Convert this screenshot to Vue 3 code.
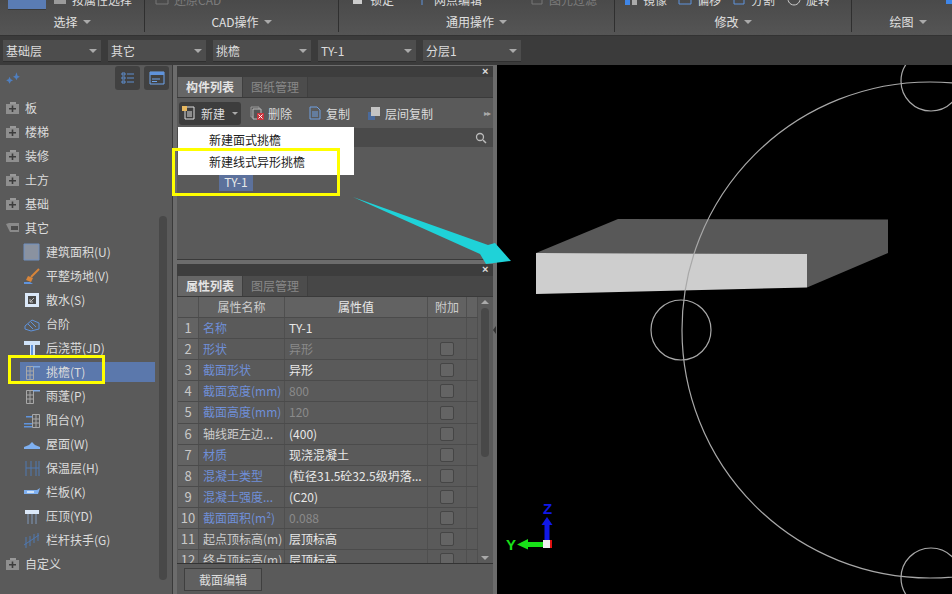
<template>
  <div class="app">
    <!-- 顶部功能区 -->
    <div class="ribbon">
      <div v-for="g in ribbonGroups" :key="g.label" class="rb-group" :class="g.cls">
        <div class="rb-items">
          <div v-if="g.button" class="rb-bigbtn"></div>
          <div v-for="it in g.items" :key="it.text" class="rb-item" :class="{ dim: it.dim }" :style="{ width: it.w + 'px' }">
            <svg class="rb-icon" viewBox="0 0 14 14"><path v-for="(p, i) in it.icon" :key="i" :d="p.d" :fill="p.f || 'none'" :stroke="p.s || 'none'" /></svg>
            <span>{{ it.text }}</span>
          </div>
        </div>
        <div class="rb-label">{{ g.label }}<i class="tri"></i></div>
      </div>
    </div>

    <!-- 楼层 / 构件选择条 -->
    <div class="combos">
      <div v-for="c in combos" :key="c" class="combo"><span>{{ c }}</span><i class="tri"></i></div>
    </div>

    <div class="main">
      <!-- 左侧构件树 -->
      <div class="left">
        <div class="left-top">
          <svg class="sparkle" viewBox="0 0 14 10"><path d="M1 7l2-1 1-2 1 2 2 1-2 1-1 2-1-2zM7 4l2-1 1-3 1 3 2 1-2 1-1 2-1-2z" fill="#4f7fc0" /></svg>
          <div class="view-btns">
            <div class="view-btn">
              <svg viewBox="0 0 14 14"><path d="M1 2h3v2H1zM1 6h3v2H1zM1 10h3v2H1z" fill="none" stroke="#5f8fd0" /><path d="M6 3h7M6 7h7M6 11h7" stroke="#5f8fd0" /></svg>
            </div>
            <div class="view-btn">
              <svg viewBox="0 0 16 14"><path d="M1 1h14v12H1z" fill="none" stroke="#6fa4ec" /><path d="M1 1h14v3H1z" fill="#5f93dc" /><path d="M3 8h8M3 10.500h5" stroke="#6fa4ec" /></svg>
            </div>
          </div>
        </div>
        <div class="left-body">
          <div class="tree">
            <div v-for="n in tree" :key="n.text" class="row" :class="{ child: n.icon, selected: n.selected }">
              <svg v-if="n.icon" class="tree-icon" viewBox="0 0 18 18">
                <path v-for="(p, i) in n.icon" :key="i" :d="p.d" :fill="p.f || 'none'" :stroke="p.s || 'none'" :stroke-width="p.w || 1" />
              </svg>
              <svg v-else class="folder" viewBox="0 0 14 12">
                <template v-if="n.open">
                  <path d="M0 2l3 -1h10v9H4z" fill="#8a8a8a" />
                  <path d="M5 4h7v4H5z" fill="#4c4c4c" />
                </template>
                <template v-else>
                  <path d="M4 0h6v2H4z" fill="#999" />
                  <path d="M0 2h13v10H0z" fill="#8f8f8f" />
                  <path d="M3 6h7v1.500H3zM5.700 3.500h1.600v6.500H5.700z" fill="#3c3c3c" />
                </template>
              </svg>
              <span class="row-text">{{ n.text }}</span>
            </div>
          </div>
          <div class="tree-scroll"></div>
        </div>
      </div>

      <!-- 中间面板 -->
      <div class="mid">
        <div class="panel list-panel">
          <div class="panel-head"><span class="close">×</span></div>
          <div class="tabs">
            <div class="tab on">构件列表</div>
            <div class="tab">图纸管理</div>
          </div>
          <div class="tools">
            <div class="tool-new">
              <svg class="tool-icon" viewBox="0 0 14 14"><path d="M3 1h9v12H3z" fill="#3d3d3d" stroke="#ddd" /><path d="M5 6h5M5 8h5M5 10h5" stroke="#ddd" /><path d="M0 0h5v5H0z" fill="#e8b860" /></svg>
              <span>新建</span><i class="tri small"></i>
            </div>
            <div class="tool">
              <svg class="tool-icon" viewBox="0 0 14 14"><path d="M1 1h8v10H1z" fill="none" stroke="#999" /><path d="M3 3h8v10H3z" fill="#555" stroke="#bbb" /><path d="M7 7h7v7H7z" fill="#c8343c" /><path d="M8.500 8.500l4 4M12.500 8.500l-4 4" stroke="#fff" /></svg>
              <span>删除</span>
            </div>
            <div class="tool">
              <svg class="tool-icon" viewBox="0 0 14 14"><path d="M2 1h7l3 3v9H2z" fill="none" stroke="#6f9fe0" /><path d="M4 6h6M4 8h6M4 10h6" stroke="#6f9fe0" /></svg>
              <span>复制</span>
            </div>
            <div class="tool">
              <svg class="tool-icon" viewBox="0 0 14 14"><path d="M1 6h7v8H1z" fill="#4a6a9c" /><path d="M4 1h9v9H4z" fill="#c4c4c4" /></svg>
              <span>层间复制</span>
            </div>
            <div class="more">▸▸</div>
          </div>
          <div class="search">
            <svg viewBox="0 0 12 12" class="search-icon"><circle cx="5" cy="5" r="3.500" fill="none" stroke="#bbb" stroke-width="1.300" /><path d="M8 8l3 3" stroke="#bbb" stroke-width="1.500" /></svg>
          </div>
          <div class="list-body">
            <span class="list-item">TY-1</span>
          </div>
          <div class="menu">
            <div class="menu-row">新建面式挑檐</div>
            <div class="menu-row">新建线式异形挑檐</div>
          </div>
        </div>

        <div class="panel prop-panel">
          <div class="panel-head"><span class="close">×</span></div>
          <div class="tabs">
            <div class="tab on">属性列表</div>
            <div class="tab">图层管理</div>
          </div>
          <div class="prop-body">
            <div class="grid">
              <div class="grid-row head">
                <div class="c-idx"></div>
                <div class="c-name">属性名称</div>
                <div class="c-val">属性值</div>
                <div class="c-add">附加</div>
                <div class="c-pad"></div>
              </div>
              <div v-for="(r, i) in props" :key="i" class="grid-row">
                <div class="c-idx">{{ i + 1 }}</div>
                <div class="c-name" :class="{ link: r.link }">{{ r.name }}</div>
                <div class="c-val" :class="{ gray: r.gray }">{{ r.val }}</div>
                <div class="c-add"><i v-if="i > 0" class="check"></i></div>
                <div class="c-pad"></div>
              </div>
            </div>
            <div class="v-scroll">
              <i class="up"></i>
              <div class="thumb"></div>
              <i class="down"></i>
            </div>
          </div>
        </div>

        <div class="foot"><div class="foot-btn">截面编辑</div></div>
      </div>

      <div class="splitter"><i></i></div>

      <!-- 三维视图 -->
      <div class="view">
        <svg width="455" height="529" viewBox="497 65 455 529">
          <g fill="none" stroke="#a8a8a8" stroke-width="1.200">
            <circle cx="681" cy="330" r="30" />
            <circle cx="931" cy="81" r="30" />
            <circle cx="931" cy="578" r="30" />
          </g>
          <path d="M536 253L618 219L888 219.500L888 253L807 287.500L807 254Z" fill="#585858" />
          <path d="M536 253L807 254L807 287.500L536 294Z" fill="#cecece" />
          <circle cx="930" cy="330" r="248" fill="none" stroke="#a8a8a8" stroke-width="1.200" />
          <path d="M549.500 541V525H552.500L547 517L541.500 525H544.500V541Z" fill="#1018e8" />
          <path d="M544 547H528V549.500L517 544.500L528 539V542H544Z" fill="#18e018" />
          <path d="M549 540h3v8h-3z" fill="#e01010" />
          <path d="M543 540h7v8h-7z" fill="#f0f0f0" />
          <text x="543" y="514" class="axis z">Z</text>
          <text x="506" y="550" class="axis y">Y</text>
        </svg>
      </div>

      <!-- 教程标注 -->
      <div class="mark mark-new"></div>
      <div class="mark mark-row"></div>
      <svg class="arrow" width="952" height="594" viewBox="0 0 952 594">
        <path d="M353 197L488 245L495 243L511 261L486 264L480 254Z" fill="#1fd2d8" />
      </svg>
    </div>
  </div>
</template>

<script setup>
const blue = '#5f93dc'
const gray = '#9a9a9a'

const ribbonGroups = [
  {
    label: '选择', cls: 'g1', button: true,
    items: [{ text: '按属性选择', w: 90, icon: [{ d: 'M1 2h12v10H1z', f: gray }] }]
  },
  {
    label: 'CAD操作', cls: 'g2',
    items: [{ text: '还原CAD', w: 90, dim: true, icon: [{ d: 'M1 2h12v10H1z', s: '#777' }] }]
  },
  {
    label: '通用操作', cls: 'g3',
    items: [
      { text: '锁定', w: 64, icon: [{ d: 'M2 3h9v9H2z', f: '#ccc' }] },
      { text: '网点编辑', w: 115, icon: [{ d: 'M1 7h12M7 1v12', s: blue }] },
      { text: '图元过滤', w: 70, dim: true, icon: [{ d: 'M2 2h10v10H2z', s: '#777' }] }
    ]
  },
  {
    label: '修改', cls: 'g4',
    items: [
      { text: '镜像', w: 54, icon: [{ d: 'M1 1h5v12H1z', f: '#3f86e8' }, { d: 'M8 1h5v12H8z', f: '#aaa' }] },
      { text: '偏移', w: 54, icon: [{ d: 'M1 4h12v8H1z', s: blue }] },
      { text: '分割', w: 55, icon: [{ d: 'M2 2h10v10H2z', s: blue }] },
      { text: '旋转', w: 50, icon: [{ d: 'M7 1a6 6 0 1 0 .01 0z', s: '#ccc' }] }
    ]
  },
  {
    label: '绘图', cls: 'g5',
    items: [{ text: '', w: 20, icon: [{ d: 'M1 4h10v8H1z', f: '#3f86e8' }] }]
  }
]

const combos = ['基础层', '其它', '挑檐', 'TY-1', '分层1']

const gridIcon = [
  { d: 'M3.500 3.500h7v13h-7zM7 3.500v13M3.500 8h7M3.500 12h7', s: '#a8a8a8' }
]

const tree = [
  { text: '板' }, { text: '楼梯' }, { text: '装修' }, { text: '土方' }, { text: '基础' },
  { text: '其它', open: true },
  { text: '建筑面积(U)', icon: [{ d: 'M1 1h15v16H1z', f: '#8a92a0', s: '#6f8fc0' }] },
  {
    text: '平整场地(V)',
    icon: [
      { d: 'M16 2L8 10', s: '#d8853a', w: 2 },
      { d: 'M5 9l5 2-2 4-5-2z', f: '#d8853a' },
      { d: 'M1 15l6 0 3 2H1z', f: '#5f93dc' }
    ]
  },
  {
    text: '散水(S)',
    icon: [
      { d: 'M2 2h14v14H2z', f: '#dbe8f8' },
      { d: 'M5 5h8v8H5z', f: '#4a4a4a' },
      { d: 'M7 11l4-4M7 8v3h3', s: '#c0c0c0' }
    ]
  },
  {
    text: '台阶',
    icon: [
      { d: 'M2 11l7-6 7 3v6l-8 2-6-2z', s: '#5f93dc' },
      { d: 'M5 9l5 5M8 7l5 5', s: '#5f93dc' }
    ]
  },
  {
    text: '后浇带(JD)',
    icon: [
      { d: 'M1 2h16v4H12v10H7V6H1z', f: '#cfe2f8' },
      { d: 'M8 6h2v10H8z', f: '#5f93dc' }
    ]
  },
  { text: '挑檐(T)', selected: true, icon: [...gridIcon, { d: 'M10 3h7v1.500h-7z', f: '#7fa8e0' }] },
  { text: '雨蓬(P)', icon: [...gridIcon, { d: 'M10 3h7v1.500h-7z', f: '#7fa8e0' }] },
  {
    text: '阳台(Y)',
    icon: [
      { d: 'M9.500 3.500h7v13h-7zM13 3.500v13M9.500 8h7M9.500 12h7', s: '#a8a8a8' },
      { d: 'M3 5h6v1.500H3zM1 12h8v1.500H1zM1 15h8v1.500H1z', f: '#5f93dc' }
    ]
  },
  { text: '屋面(W)', icon: [{ d: 'M1 12l5-2 3-3 3 3 5 2v2H1z', f: '#7fb0f0' }] },
  { text: '保温层(H)', icon: [{ d: 'M3 2v15M8 2v15M13 2v15M16 2v15M3 9h13', s: '#4f78b0' }] },
  { text: '栏板(K)', icon: [{ d: 'M1 7h13l3-2-2 6H1z', f: '#7fb0f0' }, { d: 'M4 8h7v2H4z', f: '#cfe2f8' }] },
  { text: '压顶(YD)', icon: [{ d: 'M2 3h14v4H2z', f: '#dbe8f8' }, { d: 'M5 7v10M9 7v10M13 7v10', s: '#7f97b8' }] },
  { text: '栏杆扶手(G)', icon: [{ d: 'M1 14L16 4M3 6v11M7 5v10M11 3v9M15 2v8', s: '#4f78b0' }] },
  { text: '自定义' }
]

const props = [
  { name: '名称', val: 'TY-1', link: true },
  { name: '形状', val: '异形', link: true, gray: true },
  { name: '截面形状', val: '异形', link: true },
  { name: '截面宽度(mm)', val: '800', link: true, gray: true },
  { name: '截面高度(mm)', val: '120', link: true, gray: true },
  { name: '轴线距左边...', val: '(400)' },
  { name: '材质', val: '现浇混凝土', link: true },
  { name: '混凝土类型', val: '(粒径31.5砼32.5级坍落...', link: true },
  { name: '混凝土强度...', val: '(C20)', link: true },
  { name: '截面面积(m²)', val: '0.088', link: true, gray: true },
  { name: '起点顶标高(m)', val: '层顶标高' },
  { name: '终点顶标高(m)', val: '层顶标高' }
]
</script>

<style>
html,
body {
  margin: 0;
  background: #000;
}
</style>

<style scoped>
.app {
  position: relative;
  width: 952px;
  height: 594px;
  overflow: hidden;
  display: flex;
  flex-direction: column;
  font-family: "Noto Sans CJK SC", "Liberation Sans", sans-serif;
  font-size: 12px;
  color: #dcdcdc;
}

.tri {
  display: inline-block;
  width: 0;
  height: 0;
  border-left: 4px solid transparent;
  border-right: 4px solid transparent;
  border-top: 4px solid #aaa;
}

/* ribbon */
.ribbon {
  height: 36px;
  flex: none;
  display: flex;
  background: linear-gradient(#4a4a4a, #555);
  border-bottom: 1px solid #333;
  box-sizing: border-box;
  overflow: hidden;
}
.rb-group {
  flex: none;
  box-sizing: border-box;
  border-right: 1px solid #2f2f2f;
  height: 32px;
}
.g1 { width: 145px; padding-left: 8px; }
.g2 { width: 194px; padding-left: 10px; }
.g3 { width: 276px; padding-left: 12px; }
.g4 { width: 237px; padding-left: 9px; }
.g5 { width: 112px; padding-left: 93px; border-right: 0; }
.g1 .rb-label { margin-left: -8px; }
.g2 .rb-label { margin-left: -10px; }
.g3 .rb-label { margin-left: -12px; }
.g4 .rb-label { margin-left: -9px; }
.g5 .rb-label { margin-left: -93px; }
.rb-items {
  height: 12px;
  display: flex;
  overflow: hidden;
}
.rb-bigbtn {
  width: 38px;
  height: 9px;
  flex: none;
  margin-right: 7px;
  background: #5a7cb4;
  border-bottom: 1px solid #3a3a3a;
}
.rb-item {
  flex: none;
  display: flex;
  align-items: center;
  gap: 5px;
  height: 16px;
  margin-top: -9px;
}
.rb-item.dim { color: #7c7c7c; }
.rb-icon {
  width: 14px;
  height: 14px;
  flex: none;
}
.rb-label {
  height: 20px;
  line-height: 20px;
  display: flex;
  justify-content: center;
  align-items: center;
  gap: 5px;
  color: #e0e0e0;
}

/* combo row */
.combos {
  height: 29px;
  flex: none;
  box-sizing: border-box;
  padding: 4px 0 0 3px;
  display: flex;
  gap: 7px;
  background: #3b3b3b;
}
.combo {
  width: 98px;
  height: 22px;
  box-sizing: border-box;
  padding: 0 4px 0 3px;
  display: flex;
  align-items: center;
  justify-content: space-between;
  background: #4d4d4d;
  border-bottom: 1px solid #2f2f2f;
}

/* main area */
.main {
  flex: 1;
  min-height: 0;
  display: flex;
}

.left {
  width: 173px;
  flex: none;
  box-sizing: border-box;
  background: #5a5a5a;
  border-right: 1px solid #3a3a3a;
}
.left-top {
  height: 28px;
  display: flex;
  align-items: flex-start;
  justify-content: space-between;
  padding: 1px 3px 0 5px;
  box-sizing: border-box;
}
.sparkle {
  width: 16px;
  height: 12px;
  margin-top: 6px;
}
.view-btns {
  display: flex;
  gap: 4px;
}
.view-btn {
  width: 25px;
  height: 24px;
  box-sizing: border-box;
  background: #414141;
  border-radius: 3px;
  display: flex;
  align-items: center;
  justify-content: center;
}
.view-btn svg {
  width: 16px;
  height: 14px;
}
.left-body {
  display: flex;
  padding-top: 3px;
}
.tree {
  width: 155px;
  flex: none;
}
.row {
  height: 24px;
  display: flex;
  align-items: center;
  gap: 5px;
  padding-left: 6px;
  box-sizing: border-box;
}
.row-text {
  padding-bottom: 2px;
}
.row.child {
  margin-left: 20px;
  padding-left: 3px;
}
.row.selected {
  background: #5b78ac;
  height: 20px;
  margin: 2px 0 2px 20px;
}
.folder {
  width: 14px;
  height: 12px;
  flex: none;
}
.tree-icon {
  width: 18px;
  height: 18px;
  flex: none;
}
.tree-scroll {
  width: 8px;
  height: 364px;
  margin: 120px 0 0 4px;
  background: #484848;
  border-radius: 4px;
}

/* middle */
.mid {
  width: 320px;
  flex: none;
  box-sizing: border-box;
  padding: 1px 0 0 4px;
  background: #6c6c6c;
  display: flex;
  flex-direction: column;
}
.panel {
  position: relative;
  background: #5a5a5a;
  display: flex;
  flex-direction: column;
  box-sizing: border-box;
  width: 316px;
  flex: none;
}
.list-panel {
  height: 194px;
  margin-bottom: 4px;
  border-bottom: 1px solid #3a3a3a;
}
.prop-panel {
  height: 300px;
  overflow: hidden;
  border-bottom: 1px solid #333;
}
.panel-head {
  height: 11px;
  flex: none;
  background: #3d3d3d;
  display: flex;
  justify-content: flex-end;
}
.prop-panel .panel-head {
  height: 12px;
}
.close {
  width: 11px;
  font: bold 11px/11px "Liberation Sans", sans-serif;
  color: #ddd;
}
.tabs {
  height: 21px;
  flex: none;
  display: flex;
  background: #474747;
  border-bottom: 1px solid #3a3a3a;
  box-sizing: border-box;
  padding-left: 1px;
}
.tab {
  width: 64px;
  line-height: 20px;
  text-align: center;
  color: #888;
  background: #4c4c4c;
  border-right: 1px solid #3f3f3f;
}
.tab.on {
  font-weight: 700;
  color: #e4e4e4;
  background: #666;
}
.tools {
  height: 30px;
  flex: none;
  display: flex;
  align-items: center;
  padding-left: 2px;
  box-sizing: border-box;
}
.tool-new {
  width: 62px;
  height: 23px;
  flex: none;
  box-sizing: border-box;
  padding-left: 3px;
  display: flex;
  align-items: center;
  gap: 5px;
  background: #3d3d3d;
  border-radius: 3px;
  margin-right: 9px;
}
.tri.small {
  border-left-width: 3px;
  border-right-width: 3px;
  border-top-width: 3px;
  margin-left: 2px;
}
.tool {
  display: flex;
  align-items: center;
  gap: 4px;
  margin-right: 16px;
}
.tool:nth-child(3) {
  margin-right: 17px;
}
.tool-icon {
  width: 14px;
  height: 14px;
  flex: none;
}
.more {
  margin-left: auto;
  width: 9px;
  font: 8px "DejaVu Sans", sans-serif;
  letter-spacing: -1px;
  color: #aaa;
}
.search {
  height: 19px;
  flex: none;
  background: #4a4a4a;
  display: flex;
  justify-content: flex-end;
  align-items: center;
  padding-right: 6px;
}
.search-icon {
  width: 12px;
  height: 12px;
}
.list-body {
  flex: 1;
  padding: 25px 0 0 42px;
}
.list-item {
  display: block;
  width: 34px;
  height: 19px;
  line-height: 19px;
  text-align: center;
  background: #5c719c;
  color: #e8e8e8;
}
.menu {
  position: absolute;
  left: 1px;
  top: 61px;
  width: 176px;
  height: 48px;
  background: #fff;
  color: #222;
  padding-top: 2px;
  box-sizing: border-box;
}
.menu-row {
  height: 22px;
  line-height: 22px;
  padding-left: 31px;
}

/* property grid */
.prop-body {
  flex: 1;
  min-height: 0;
  display: flex;
  overflow: hidden;
  padding-left: 1px;
}
.grid {
  width: 300px;
  flex: none;
}
.grid-row {
  display: grid;
  grid-template-columns: 21px 86px 143px 39px 11px;
  height: 21.100px;
  box-sizing: border-box;
  border-bottom: 1px solid #4b4b4b;
  line-height: 20px;
}
.grid-row > div {
  border-right: 1px solid #4f4f4f;
  white-space: nowrap;
  overflow: hidden;
}
.grid-row.head {
  background: #626262;
  text-align: center;
  color: #ccc;
}
.c-idx {
  text-align: center;
  background: #636363;
  color: #c8c8c8;
  font-size: 13px;
}
.c-name {
  padding-left: 4px;
  color: #ccc;
}
.head .c-name,
.head .c-val {
  padding-left: 0;
}
.c-name.link { color: #6f8fd8; }
.c-val {
  padding-left: 4px;
  color: #e8e8e8;
}
.c-val.gray { color: #8a8a8a; }
.c-add {
  display: flex;
  align-items: center;
  justify-content: center;
}
.check {
  width: 12px;
  height: 12px;
  background: #646464;
  border: 1px solid #454545;
  border-radius: 2px;
}
.v-scroll {
  width: 12px;
  margin-left: 1px;
  flex: none;
  display: flex;
  flex-direction: column;
  align-items: center;
  position: relative;
}
.thumb {
  width: 8px;
  height: 149px;
  margin-top: 4px;
  background: #484848;
  border-radius: 4px;
}
.up,
.down {
  width: 0;
  height: 0;
  border-left: 4px solid transparent;
  border-right: 4px solid transparent;
}
.up {
  border-bottom: 4px solid #aaa;
  margin-top: 3px;
}
.down {
  border-top: 4px solid #aaa;
  margin-top: auto;
  margin-bottom: 3px;
}

.foot {
  flex: 1;
  padding: 4px 0 0 7px;
  background: #5a5a5a;
  margin-right: 0;
}
.foot-btn {
  width: 78px;
  height: 23px;
  line-height: 22px;
  text-align: center;
  background: #606060;
  border: 1px solid #3f3f3f;
  box-sizing: border-box;
  color: #ddd;
}

.splitter {
  width: 4px;
  flex: none;
  background: #6c6c6c;
  position: relative;
}
.splitter i {
  position: absolute;
  left: 0;
  top: 261px;
  border-top: 4px solid transparent;
  border-bottom: 4px solid transparent;
  border-right: 3px solid #333;
}

.view {
  flex: 1;
  background: #000;
  overflow: hidden;
}
.view svg {
  display: block;
}
.axis {
  font: 700 15px "Liberation Sans", sans-serif;
}
.axis.z { fill: #1018e8; }
.axis.y { fill: #18e018; }

/* annotations drawn on top of the screenshot */
.mark {
  position: absolute;
  box-sizing: border-box;
  border: 3px solid #ffff00;
}
.mark-new {
  left: 172px;
  top: 148px;
  width: 168px;
  height: 48px;
}
.mark-row {
  left: 8px;
  top: 355px;
  width: 97px;
  height: 29px;
}
.arrow {
  position: absolute;
  left: 0;
  top: 0;
  pointer-events: none;
}
</style>
